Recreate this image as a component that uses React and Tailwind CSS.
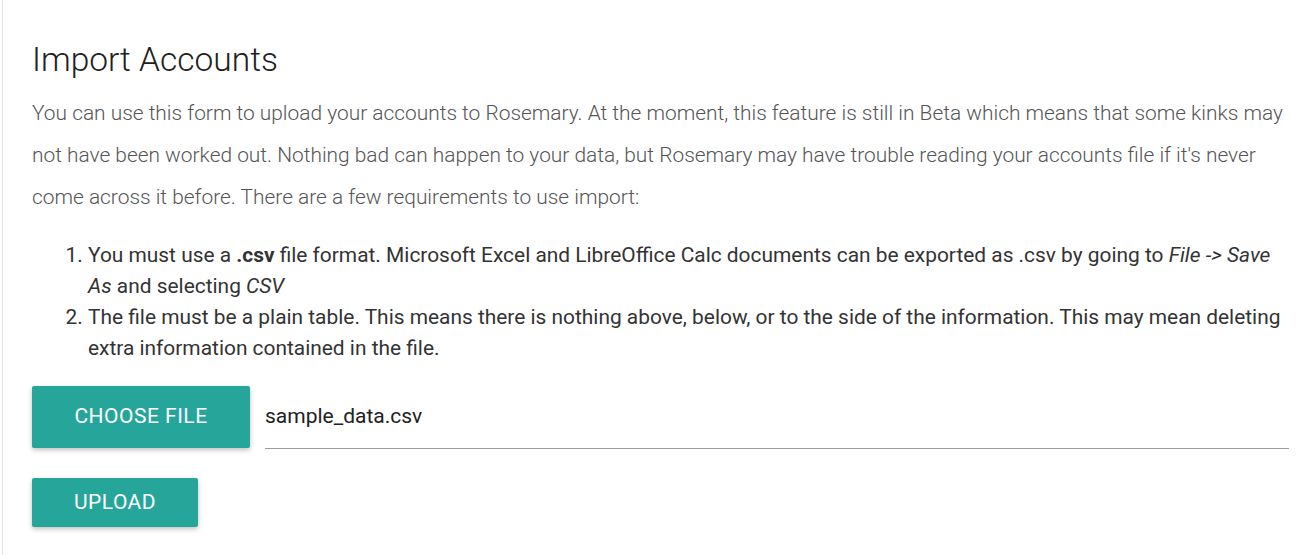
export default function App() {
  return (
    <div className="min-h-[555px] bg-white font-['Roboto',sans-serif]">
      <div className="ml-[2px] min-h-[555px] border-l border-[#e6e6e6] pl-[29px] pr-[20px] pt-[38px]">
        <h4 className="text-[33.5px] font-light leading-[44px] text-[#212121]">Import Accounts</h4>
        <p className="mt-[10px] text-[20.9px] font-light leading-[42px] text-[#555]">
          You can use this form to upload your accounts to Rosemary. At the moment, this feature is still in Beta which means that some kinks may
          not have been worked out. Nothing bad can happen to your data, but Rosemary may have trouble reading your accounts file if it's never
          come across it before. There are a few requirements to use import:
        </p>
        <ol className="mt-[22px] list-decimal pl-[56px] text-[20.9px] leading-[31px] text-[#333]">
          <li>
            You must use a <b>.csv</b> file format. Microsoft Excel and LibreOffice Calc documents can be exported as .csv by going to{" "}
            <i>File -&gt; Save As</i> and selecting <i>CSV</i>
          </li>
          <li>
            The file must be a plain table. This means there is nothing above, below, or to the side of the information. This may mean deleting
            extra information contained in the file.
          </li>
        </ol>
        <div className="mr-[7px] mt-[22px] flex items-start gap-[15px]">
          <button className="h-[62px] w-[218px] rounded-[2px] bg-[#26a69a] text-[21px] uppercase tracking-[0.5px] text-white shadow-[0_2px_5px_rgba(0,0,0,0.25)]">
            Choose File
          </button>
          <div className="flex h-[63px] flex-1 items-center border-b border-[#9e9e9e] text-[21px] text-[#212121]">sample_data.csv</div>
        </div>
        <button className="mt-[29px] h-[49px] w-[166px] rounded-[2px] bg-[#26a69a] text-[21px] uppercase tracking-[0.5px] text-white shadow-[0_2px_5px_rgba(0,0,0,0.25)]">
          Upload
        </button>
      </div>
    </div>
  );
}
